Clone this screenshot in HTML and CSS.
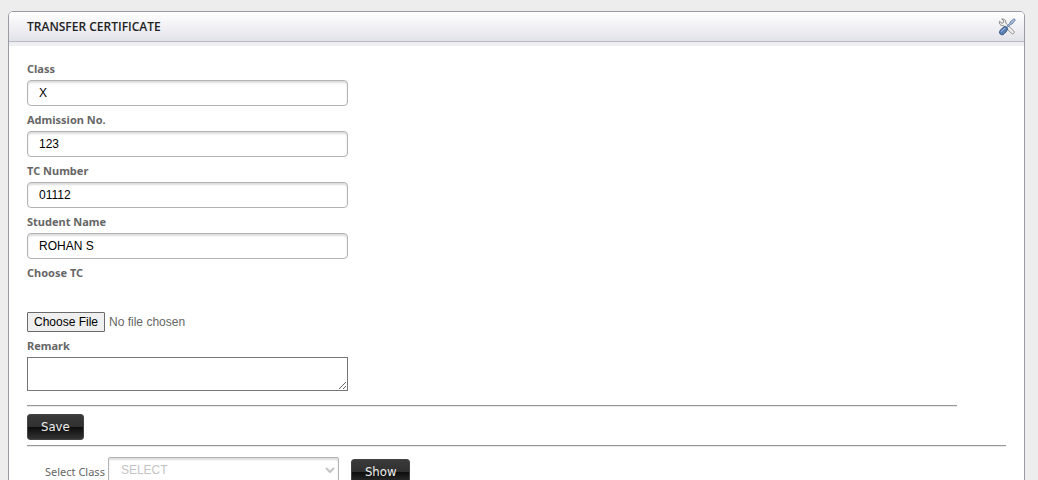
FILE: index.html
```html
<!doctype html>
<html lang="en">
<head>
<meta charset="utf-8">
<title>Transfer Certificate</title>
<link rel="stylesheet" href="styles.css">
</head>

<body>
<div class="panel">
	<div class="panel-head">
		<h1>TRANSFER CERTIFICATE</h1>
		<svg class="tools" viewBox="0 0 18 18" width="18" height="18" aria-hidden="true">
			<path d="M1.5 3.2 L4 5.3 L5.7 4.3 L5.2 2 L3.6 1 C6 .6 8 2 7.9 4.7 L8.5 6 L15.8 13.1 C17 14.6 15.2 16.8 13.6 15.4 L6.4 8.1 L4.8 7.7 C2.4 7.8 .8 5.4 1.5 3.2Z" fill="#f1f1ef" stroke="#8b8b8b" stroke-width="1"/>
			<path d="M16.9 1.2 L15.5 1 L12 4.1 L11.9 5.2 L8.4 8.7 L9.4 9.7 L12.9 6.2 L14 6.1 L17 2.6Z" fill="#a9bddb" stroke="#53719e" stroke-width=".8"/>
			<path d="M7.4 8.5 L9.6 10.7 C9.4 12.5 6.7 15.6 5 16.6 C3 17.4 .9 15.4 1.6 13.4 C2.6 11.4 5.6 8.7 7.4 8.5Z" fill="#5b80b5" stroke="#355581" stroke-width="1"/>
			<path d="M3 13.8 L7.2 9.9" stroke="#a5c0e2" stroke-width="1"/>
		</svg>
	</div>
	<div class="panel-body">
		<form>
			<label for="class">Class</label>
			<input type="text" class="text" id="class" value="X">
			<label for="admission">Admission No.</label>
			<input type="text" class="text" id="admission" value="123">
			<label for="tc">TC Number</label>
			<input type="text" class="text" id="tc" value="01112">
			<label for="student">Student Name</label>
			<input type="text" class="text" id="student" value="ROHAN S">
			<label for="file">Choose TC</label>
			<input type="file" class="file" id="file">
			<label for="remark" class="remark-label">Remark</label>
			<textarea id="remark" class="remark"></textarea>
			<hr class="short">
			<button type="button" class="btn">Save</button>
		</form>
		<hr>
		<div class="filter">
			<label for="select">Select Class</label>
			<select id="select">
				<option>SELECT</option>
			</select>
			<button type="button" class="btn">Show</button>
		</div>
	</div>
</div>
</body>
</html>
```
FILE: styles.css
```css
* {box-sizing:border-box;}

html, body {height:100%;}
body {margin:0; padding:11px 13px 0 8px; background:#ededed; color:#666; font:11px/15px "DejaVu Sans Condensed", "Noto Sans", sans-serif; overflow:hidden;}

.panel {background:#fff; border:1px solid #999ba4; border-radius:5px 5px 0 0;}

.panel-head {display:flex; align-items:center; justify-content:space-between; height:30px; padding:0 8px 0 18px; background:linear-gradient(#fff, #e2e2ea); border-bottom:1px solid #b9bac6; border-radius:4px 4px 0 0; box-shadow:0 4px 0 #efeff4;}
.panel-head h1 {margin:0; color:#222; font:600 12px/16px "Open Sans", "Noto Sans", sans-serif;}
.tools {display:block;}

.panel-body {padding:13px 18px 20px;}

form label {display:block; height:25px; padding-top:6px; font:bold 11px/15px "Noto Sans", sans-serif;}

.text {display:block; width:321px; max-width:100%; height:26px; padding:0 11px; border:1px solid #b3b3b3; border-radius:4px; background:#fff; box-shadow:inset 0 2px 2px #ddd; color:#000; font:12px/16px "Liberation Sans", Arial, sans-serif;}

.file {display:block; width:321px; max-width:100%; margin-top:28px; color:#666; font:12px/16px "Liberation Sans", Arial, sans-serif;}
.file::file-selector-button {height:20px; margin:0 4px 0 0; padding:0 6px; border:1px solid #6b6b6b; border-radius:1px; background:#efefef; color:#000; font:12px/16px "Liberation Sans", Arial, sans-serif;}

.remark {display:block; width:321px; max-width:100%; height:34px; border:1px solid #767676; border-radius:0; background:#fff; resize:both;}

hr {height:2px; margin:5px 0 0; border:0; border-top:1px solid #999; border-bottom:1px solid #e8e8e8;}
.short {width:95%; margin:14px 0 7px;}

.btn {display:block; height:26px; padding:0 13px; border:1px solid #444; border-radius:3px; background:linear-gradient(#3a3a3a, #303030 50%, #0c0c0c 50%, #333); color:#eee; font:13px/18px "DejaVu Sans Condensed", sans-serif;}

.filter {display:flex; align-items:flex-start; padding:10px 0 0 18px;}
.filter label {padding-top:6px; margin-right:3px; font:11px/15px "Noto Sans", sans-serif; padding-top:7px;}
.filter select {width:231px; height:26px; padding:0 8px; border:1px solid #b3b3b3; border-radius:2px; background:#fff; box-shadow:inset 0 2px 2px #ddd; color:#c4c4c4; font:12px/16px "Liberation Sans", Arial, sans-serif;}
.filter .btn {margin:2px 0 0 12px;}
```
